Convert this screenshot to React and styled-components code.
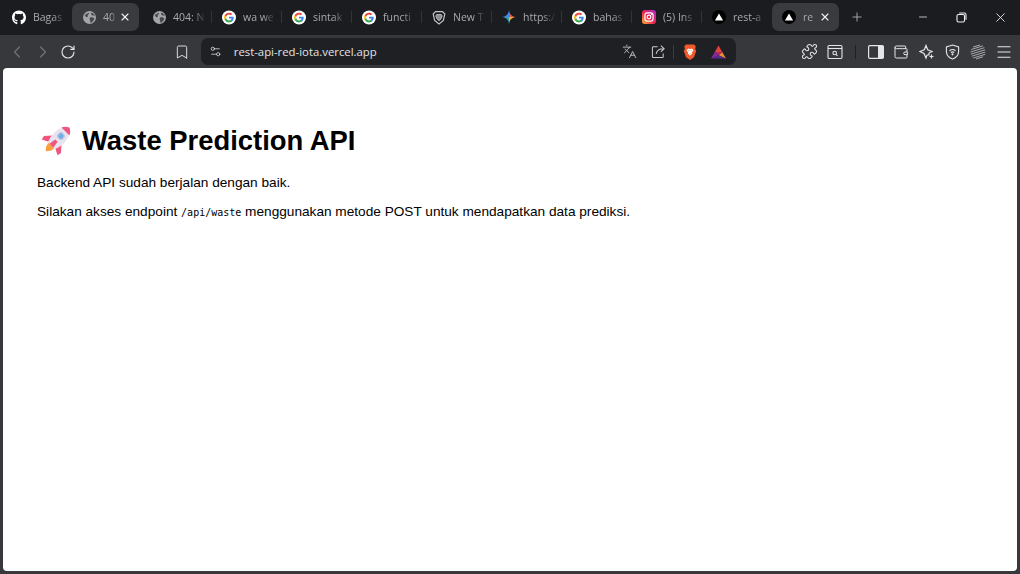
import React from "react";
import styled, { createGlobalStyle } from "styled-components";
import { FaGithub } from "react-icons/fa";
import { ChevronLeft, ChevronRight, RotateCw, Bookmark, Settings2, Languages, Puzzle, Wallet, Menu, Plus, X, Minus } from "lucide-react";

const GlobalStyle = createGlobalStyle`
    html, body {
        margin: 0;
        padding: 0;
        overflow: hidden;
    }
`;

function GoogleIcon () {
    return (
        <svg width="15" height="15" viewBox="0 0 24 24">
            <circle cx="12" cy="12" r="12" fill="#fff" />
            <g transform="translate(2.9 2.900) scale(0.76)">
                <path fill="#4285F4" d="M22.56 12.25c0-.78-.07-1.53-.2-2.25H12v4.26h5.92c-.26 1.37-1.04 2.53-2.21 3.31v2.77h3.57c2.08-1.92 3.28-4.74 3.28-8.09z" />
                <path fill="#34A853" d="M12 23c2.97 0 5.46-.98 7.28-2.66l-3.57-2.77c-.98.66-2.23 1.06-3.71 1.06-2.86 0-5.29-1.93-6.16-4.53H2.18v2.84C3.99 20.53 7.7 23 12 23z" />
                <path fill="#FBBC05" d="M5.84 14.09c-.22-.66-.35-1.36-.35-2.09s.13-1.43.35-2.09V7.07H2.18C1.43 8.55 1 10.22 1 12s.43 3.45 1.18 4.93l3.66-2.84z" />
                <path fill="#EA4335" d="M12 5.38c1.62 0 3.06.56 4.21 1.64l3.15-3.15C17.45 2.09 14.97 1 12 1 7.7 1 3.99 3.47 2.18 7.07l3.66 2.84c.87-2.6 3.3-4.53 6.16-4.53z" />
            </g>
        </svg>
    );
}

function GlobeIcon () {
    return (
        <svg width="13" height="13" viewBox="0 0 24 24">
            <circle cx="12" cy="12" r="12" fill="#a4a5a9" />
            <path fill="#46474b" d="M3 7c3-1 5-3 8-4 1 2-1 3-2 4s1 3-1 4-3 0-5-4zM13 12c3-1 6 0 8 2-1 4-4 7-7 8-1-2 0-3-1-5s-1-4 0-5zM15 3c3 0 6 3 7 6-2 0-4 0-5-1s-3-3-2-5z" />
        </svg>
    );
}

function VercelIcon () {
    return (
        <svg width="14" height="14" viewBox="0 0 24 24">
            <circle cx="12" cy="12" r="12" fill="#000" />
            <path fill="#fff" d="M12 6l7 12H5z" />
        </svg>
    );
}

function ShieldIcon () {
    return (
        <svg width="14" height="15" viewBox="0 0 24 24" fill="none" stroke="#c2c3c7" strokeWidth="2">
            <path d="M6 2h12l4 4-2.500 11L12 23 4.500 17 2 6z" />
            <path d="M8 7h8l1.500 2.500L15 15l-3 2.500L9 15 6.500 9.500z" fill="#8b8c90" strokeWidth="1.500" />
        </svg>
    );
}

function GeminiIcon () {
    return (
        <svg width="14" height="14" viewBox="0 0 24 24">
            <path fill="#4285f4" d="M12 0c-1 7-4 11-12 12h12z" />
            <path fill="#e2574c" d="M12 0c1 7 4 11 12 12H12z" />
            <path fill="#f2a93b" d="M24 12c-8 1-11 5-12 12V12z" />
            <path fill="#2f9fa8" d="M0 12c8 1 11 5 12 12V12z" />
        </svg>
    );
}

function InstagramIcon () {
    return (
        <svg width="14" height="14" viewBox="0 0 24 24">
            <defs>
                <linearGradient id="insta" x1="0" y1="1" x2="1" y2="0">
                    <stop offset="0" stopColor="#fdb62f" />
                    <stop offset="0.45" stopColor="#f0264f" />
                    <stop offset="1" stopColor="#a928c9" />
                </linearGradient>
            </defs>
            <rect width="24" height="24" rx="5" fill="url(#insta)" />
            <rect x="5" y="5" width="14" height="14" rx="4" fill="none" stroke="#fff" strokeWidth="2" />
            <circle cx="12" cy="12" r="3.2" fill="none" stroke="#fff" strokeWidth="2" />
            <circle cx="16.5" cy="7.5" r="1.1" fill="#fff" />
        </svg>
    );
}

const favicons = {
    github: <FaGithub size={15} color="#fff" />,
    globe: <GlobeIcon />,
    google: <GoogleIcon />,
    shield: <ShieldIcon />,
    gemini: <GeminiIcon />,
    insta: <InstagramIcon />,
    vercel: <VercelIcon />
};

const tabs = [
    { icon: "github", title: "Bagas", sep: false },
    { icon: "globe", title: "40", active: true },
    { icon: "globe", title: "404: N", sep: true },
    { icon: "google", title: "wa we", sep: true },
    { icon: "google", title: "sintak", sep: true },
    { icon: "google", title: "functi", sep: true },
    { icon: "shield", title: "New T", sep: true },
    { icon: "gemini", title: "https:/", sep: true },
    { icon: "google", title: "bahas", sep: true },
    { icon: "insta", title: "(5) Ins", sep: true },
    { icon: "vercel", title: "rest-a", sep: false },
    { icon: "vercel", title: "re", active: true }
];

function Rocket () {
    return (
        <RocketSvg viewBox="0 0 40 40">
            <g transform="rotate(45 20 20)">
                <path fill="#f0557f" d="M12 20l-7 8 1 5 8-4zM28 20l7 8-1 5-8-4z" />
                <path fill="#f6a13c" d="M15 30h10l-1 5-4 5-4-5z" />
                <path fill="#e9e3ef" d="M20 -1c7 4 9 11 9 18 0 5-2 10-3 13H14c-1-3-3-8-3-13 0-7 2-14 9-18z" />
                <path fill="#f0557f" d="M20 -2c3 1.500 6 4 7 7H13c1-3 4-5.500 7-7z" />
                <path fill="#f0557f" d="M18 21h4l1.500 9h-7z" />
                <circle cx="20" cy="13" r="4" fill="#6fb0e8" stroke="#c3c7dc" strokeWidth="1.400" />
            </g>
        </RocketSvg>
    );
}

function App () {
    return (
        <Window>
            <GlobalStyle />
            <TabStrip>
                {tabs.map((tab, i) => (
                    <Tab key={i} $active={tab.active} $sep={tab.sep}>
                        <Favicon>{favicons[tab.icon]}</Favicon>
                        <TabTitle $active={tab.active}>{tab.title}</TabTitle>
                        {tab.active && <TabClose><X size={12} strokeWidth={2.2} /></TabClose>}
                    </Tab>
                ))}
                <NewTab><Plus size={14} strokeWidth={1.6} /></NewTab>
                <WindowControls>
                    <WindowButton><Minus size={12} strokeWidth={1.5} /></WindowButton>
                    <WindowButton>
                        <svg width="11" height="11" viewBox="0 0 11 11" fill="none" stroke="currentColor" strokeWidth="1.1">
                            <rect x="1" y="2.500" width="7.500" height="7.500" rx="1.500" />
                            <path d="M3.200 1h5c1 0 1.800.8 1.800 1.800v5" />
                        </svg>
                    </WindowButton>
                    <WindowButton><X size={15} strokeWidth={1.4} /></WindowButton>
                </WindowControls>
            </TabStrip>
            <Toolbar>
                <ToolButton $dim><ChevronLeft size={20} strokeWidth={1.3} /></ToolButton>
                <ToolButton $dim><ChevronRight size={20} strokeWidth={1.3} /></ToolButton>
                <ToolButton><RotateCw size={16} strokeWidth={1.7} /></ToolButton>
                <BookmarkButton><Bookmark size={16} strokeWidth={1.4} /></BookmarkButton>
                <UrlBar>
                    <Settings2 size={13} strokeWidth={1.5} color="#d5d6d9" />
                    <UrlText>rest-api-red-iota.vercel.app</UrlText>
                    <UrlActions>
                        <UrlAction><Languages size={15} strokeWidth={1.4} /></UrlAction>
                        <UrlAction>
                            <svg width="15" height="15" viewBox="0 0 16 16" fill="none" stroke="currentColor" strokeWidth="1.100">
                                <path d="M7 3H2.500A1 1 0 0 0 1.500 4v9.500A1 1 0 0 0 2.500 14.500h9.500a1 1 0 0 0 1-1V10" />
                                <path d="M5.500 10.500C6 7 8.500 5 13 5M10.500 1.800 14 5l-3.500 3.300" />
                            </svg>
                        </UrlAction>
                        <UrlDivider />
                        <UrlAction>
                            <svg width="14" height="16" viewBox="0 0 24 28">
                                <path fill="#f1592a" d="M5 1h14l3 3-1 5 2 3-4 11-7 5-7-5-4-11 2-3-1-5z" />
                                <path fill="#fff" d="M7 9l3-1 2 1 2-1 3 1 1 3-3 3 1 2-3 2-1 3-1-3-3-2 1-2-3-3z" />
                                <path fill="#f1592a" d="M9 11h2l-1 2zM13 11h2l-1 2zM11 16h2l-1 2z" />
                            </svg>
                        </UrlAction>
                        <UrlAction>
                            <svg width="15" height="14" viewBox="0 0 24 21">
                                <path fill="#e0413a" d="M12 0l6 10.500H6z" />
                                <path fill="#8a2a9c" d="M0 21l6-10.500 6 5z" />
                                <path fill="#e98c2f" d="M24 21l-6-10.500-6 5z" />
                                <path fill="#b12a6a" d="M6 10.500h12l-6 5z" />
                                <path fill="#5a2d93" d="M0 21h24l-12-5.500z" />
                            </svg>
                        </UrlAction>
                    </UrlActions>
                </UrlBar>
                <RightTools>
                    <ToolButton><Puzzle size={17} strokeWidth={1.5} /></ToolButton>
                    <ToolButton>
                        <svg width="16" height="16" viewBox="0 0 16 16" fill="none" stroke="currentColor" strokeWidth="1.100">
                            <rect x="1" y="1.500" width="14" height="13" rx="1.200" />
                            <path d="M1 4.500h14" />
                            <circle cx="7.700" cy="9" r="1.800" />
                            <path d="M9 10.400l1.500 1.400" />
                        </svg>
                    </ToolButton>
                    <ToolDivider />
                    <ToolButton>
                        <svg width="16" height="14" viewBox="0 0 16 14">
                            <rect x="0.600" y="0.600" width="14.800" height="12.800" rx="1.200" fill="none" stroke="currentColor" strokeWidth="1.200" />
                            <rect x="10" y="1" width="5.500" height="12" fill="currentColor" />
                        </svg>
                    </ToolButton>
                    <ToolButton><Wallet size={16} strokeWidth={1.5} /></ToolButton>
                    <ToolButton>
                        <svg width="16" height="16" viewBox="0 0 16 16" fill="none" stroke="currentColor" strokeWidth="1.200">
                            <path d="M7 1.500l1.700 4.300 4.300 1.700-3 1.500V11H8l-1 3-2-4.500L1 7.500l4.300-1.700z" />
                            <path d="M12.500 10.500v4M10.500 12.500h4" />
                        </svg>
                    </ToolButton>
                    <ToolButton>
                        <svg width="15" height="16" viewBox="0 0 16 17" fill="none" stroke="currentColor" strokeWidth="1.200">
                            <path d="M8 1l6.500 2v5c0 4-3 6.800-6.500 8-3.500-1.200-6.500-4-6.500-8V3z" />
                            <path d="M4.800 7.200c2-1.700 4.400-1.700 6.400 0M6.200 9c1.100-.8 2.500-.8 3.600 0" />
                            <circle cx="8" cy="11" r="0.500" fill="currentColor" />
                        </svg>
                    </ToolButton>
                    <ToolButton>
                        <svg width="16" height="16" viewBox="0 0 16 16" fill="none" stroke="#a9aaad" strokeWidth="1">
                            <path d="M3 3l7-2M1.300 5.500 13 1.800M.6 8l13.800-4.300M.8 10.200 15.200 5.800M1.800 12.200l13.500-4.200M3.200 14l12-3.700M6 15l7-2.200" />
                        </svg>
                    </ToolButton>
                    <ToolButton><Menu size={18} strokeWidth={1.5} /></ToolButton>
                </RightTools>
            </Toolbar>
            <Page>
                <Heading><Rocket />Waste Prediction API</Heading>
                <Paragraph>Backend API sudah berjalan dengan baik.</Paragraph>
                <Paragraph>
                    Silakan akses endpoint <Code>/api/waste</Code> menggunakan metode POST untuk mendapatkan data prediksi.
                </Paragraph>
            </Page>
        </Window>
    );
}

const Window = styled.div`
    width: 1020px;
    height: 574px;
    display: flex;
    flex-direction: column;
    background: #37383c;
    font-family: "Open Sans", "Liberation Sans", sans-serif;
    overflow: hidden;
`;

const TabStrip = styled.div`
    height: 35px;
    flex: none;
    display: flex;
    gap: 3px;
    padding: 3px 0 4px 2px;
    box-sizing: border-box;
    background: #1b1c20;
`;

const Tab = styled.div`
    position: relative;
    width: 67px;
    height: 28px;
    flex: none;
    display: flex;
    align-items: center;
    padding-left: 10px;
    box-sizing: border-box;
    border-radius: 7px;
    background: ${props => props.$active ? "#3a3b3f" : "transparent"};

    &::after {
        content: "";
        display: ${props => props.$sep ? "block" : "none"};
        position: absolute;
        right: -3px;
        top: 8px;
        width: 1px;
        height: 12px;
        background: #333438;
    }
`;

const Favicon = styled.span`
    width: 14px;
    flex: none;
    display: flex;
    align-items: center;
    justify-content: center;
`;

const TabTitle = styled.span`
    flex: 1;
    min-width: 0;
    margin-left: 7px;
    margin-right: ${props => props.$active ? "2px" : "3px"};
    font-size: 10.5px;
    color: #a8a9ad;
    white-space: nowrap;
    mask-image: linear-gradient(to right, #000 60%, transparent 100%);
`;

const TabClose = styled.span`
    width: 12px;
    margin-right: 8px;
    flex: none;
    display: flex;
    color: #f0f0f2;
`;

const NewTab = styled.span`
    width: 14px;
    height: 28px;
    margin-left: 8px;
    display: flex;
    align-items: center;
    color: #a9aaae;
`;

const WindowControls = styled.div`
    margin-left: auto;
    display: flex;
    height: 28px;
`;

const WindowButton = styled.span`
    width: 39px;
    display: flex;
    align-items: center;
    justify-content: center;
    color: #f0f0f2;
`;

const Toolbar = styled.div`
    height: 33px;
    flex: none;
    display: flex;
    align-items: center;
    padding: 0 3px 0 4px;
    box-sizing: border-box;
`;

const ToolButton = styled.span`
    width: 25.7px;
    height: 27px;
    flex: none;
    display: flex;
    align-items: center;
    justify-content: center;
    color: ${props => props.$dim ? "#74757a" : "#e4e5e8"};
`;

const BookmarkButton = styled(ToolButton)`
    margin-left: 88px;
`;

const UrlBar = styled.div`
    width: 535px;
    height: 27px;
    margin-left: 6px;
    flex: none;
    display: flex;
    align-items: center;
    padding: 0 7px 0 8px;
    box-sizing: border-box;
    border-radius: 7px;
    background: #1f2024;
`;

const UrlText = styled.span`
    margin-left: 12px;
    font-size: 11.35px;
    color: #e2e3e6;
`;

const UrlActions = styled.div`
    margin-left: auto;
    display: flex;
    align-items: center;
    gap: 9px;
`;

const UrlAction = styled.span`
    width: 20px;
    display: flex;
    align-items: center;
    justify-content: center;
    color: #c9cace;
`;

const UrlDivider = styled.span`
    width: 1px;
    height: 14px;
    margin: 0 -3px 0 -5px;
    background: #3c3d41;
`;

const RightTools = styled.div`
    margin-left: auto;
    display: flex;
    align-items: center;
`;

const ToolDivider = styled.span`
    width: 1px;
    height: 14px;
    margin: 0 7px;
    background: #1f2024;
`;

const Page = styled.main`
    flex: 1;
    margin: 0 3px 3px;
    padding: 52px 34px 0;
    border-radius: 4px;
    background: #fff;
    color: #000;
    font-family: "Liberation Sans", Arial, sans-serif;
`;

const Heading = styled.h1`
    margin: 0 0 14px;
    height: 40px;
    display: flex;
    align-items: center;
    font-size: 27.4px;
    line-height: 41px;
    font-weight: 700;
`;

const RocketSvg = styled.svg`
    width: 32px;
    height: 32px;
    flex: none;
    margin: 0 9px 0 4px;
`;

const Paragraph = styled.p`
    margin: 0 0 12px;
    font-size: 13.65px;
    line-height: 17px;
`;

const Code = styled.code`
    font-family: "DejaVu Sans Mono", monospace;
    font-size: 10px;
`;

export default App;
